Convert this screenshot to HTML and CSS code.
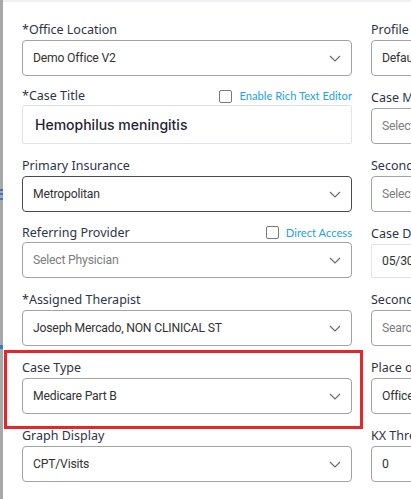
FILE: index.html
```html
<!DOCTYPE html>
<html>
<head>
<meta charset="utf-8">
<link rel="stylesheet" href="styles.css">
</head>
<body>
<div class="screen">
  <div class="backdrop"></div>
  <div class="modal">
    <div class="form">
      <div class="field">
        <div class="label">*Office Location</div>
        <div class="select"><span class="value">Demo Office V2</span><svg class="chev" width="12" height="7" viewBox="0 0 12 7"><path d="M1 1l5 5 5-5" fill="none" stroke="#6b6b6b" stroke-width="1.2"/></svg></div>
      </div>
      <div class="field">
        <div class="label">Profile</div>
        <div class="select"><span class="value">Default</span></div>
      </div>

      <div class="field">
        <div class="label label-check short"><span>*Case Title</span><span class="check"><span class="box"></span><span class="link">Enable Rich Text Editor</span></span></div>
        <div class="text-input"><span class="title-value">Hemophilus meningitis</span></div>
      </div>
      <div class="field">
        <div class="label">Case Manager</div>
        <div class="select"><span class="value ph">Select</span></div>
      </div>

      <div class="field">
        <div class="label">Primary Insurance</div>
        <div class="select focused"><span class="value">Metropolitan</span><svg class="chev" width="12" height="7" viewBox="0 0 12 7"><path d="M1 1l5 5 5-5" fill="none" stroke="#6b6b6b" stroke-width="1.2"/></svg></div>
      </div>
      <div class="field">
        <div class="label">Secondary Insurance</div>
        <div class="select"><span class="value ph">Select</span></div>
      </div>

      <div class="field">
        <div class="label label-check mid"><span>Referring Provider</span><span class="check"><span class="box"></span><span class="link">Direct Access</span></span></div>
        <div class="select"><span class="value ph">Select Physician</span><svg class="chev" width="12" height="7" viewBox="0 0 12 7"><path d="M1 1l5 5 5-5" fill="none" stroke="#6b6b6b" stroke-width="1.2"/></svg></div>
      </div>
      <div class="field">
        <div class="label">Case Date</div>
        <div class="date-input"><span class="value">05/30/2024</span></div>
      </div>

      <div class="field">
        <div class="label">*Assigned Therapist</div>
        <div class="select"><span class="value">Joseph Mercado, NON CLINICAL ST</span><svg class="chev" width="12" height="7" viewBox="0 0 12 7"><path d="M1 1l5 5 5-5" fill="none" stroke="#6b6b6b" stroke-width="1.2"/></svg></div>
      </div>
      <div class="field">
        <div class="label">Secondary Therapist</div>
        <div class="select"><span class="value ph">Search</span></div>
      </div>

      <div class="field highlighted">
        <div class="label">Case Type</div>
        <div class="select"><span class="value">Medicare Part B</span><svg class="chev" width="12" height="7" viewBox="0 0 12 7"><path d="M1 1l5 5 5-5" fill="none" stroke="#6b6b6b" stroke-width="1.2"/></svg></div>
      </div>
      <div class="field">
        <div class="label">Place of Service</div>
        <div class="select"><span class="value">Office</span></div>
      </div>

      <div class="field">
        <div class="label">Graph Display</div>
        <div class="select"><span class="value">CPT/Visits</span><svg class="chev" width="12" height="7" viewBox="0 0 12 7"><path d="M1 1l5 5 5-5" fill="none" stroke="#6b6b6b" stroke-width="1.2"/></svg></div>
      </div>
      <div class="field">
        <div class="label">KX Threshold</div>
        <div class="select"><span class="value">0</span></div>
      </div>
    </div>
  </div>
</div>
</body>
</html>
```

FILE: styles.css
```css
html, body {
  margin: 0;
  padding: 0;
  background: #ffffff;
  overflow: hidden;
}
.screen {
  display: flex;
  width: 411px;
  height: 499px;
  overflow: hidden;
}
.backdrop {
  flex: 0 0 3px;
  background:
    linear-gradient(to bottom,
      #a8a8a8 0, #a8a8a8 189px,
      #3a78c0 189px, #3a78c0 191px,
      #a8a8a8 191px, #a8a8a8 193px,
      #3a78c0 193px, #3a78c0 195px,
      #a8a8a8 195px, #a8a8a8 198px,
      #3a78c0 198px, #3a78c0 200px,
      #a8a8a8 200px, #a8a8a8 345px,
      #3a78c0 345px, #3a78c0 349px,
      #a8a8a8 349px);
}
.modal {
  flex: 1 0 auto;
  background: #fff;
  border-top: 2px solid #eef0f4;
  min-width: 720px;
}
.form {
  display: grid;
  grid-template-columns: 330px 330px;
  column-gap: 19px;
  row-gap: 11px;
  padding: 17px 0 0 19px;
  align-items: start;
}
.field {
  position: relative;
}
.label {
  font-family: "Noto Sans", sans-serif;
  font-size: 12.5px;
  line-height: 21px;
  height: 21px;
  color: #2d3446;
  white-space: nowrap;
}
.label-check {
  display: flex;
  justify-content: space-between;
  align-items: center;
}
.label-check.short { height: 18px; line-height: 18px; }
.label-check.mid { height: 19px; line-height: 19px; }
.check {
  display: flex;
  align-items: center;
  gap: 7px;
}
.box {
  width: 11px;
  height: 11px;
  border: 1px solid #7a7a7a;
  border-radius: 2px;
  background: #fff;
}
.link {
  font-family: Lato, sans-serif;
  color: #22a0f2;
  font-size: 11.2px;
}
.select {
  box-sizing: border-box;
  height: 36px;
  border: 1px solid #a3a3a3;
  border-radius: 4px;
  display: flex;
  align-items: center;
  justify-content: space-between;
  padding: 0 10px 0 10px;
  background: #fff;
}
.select.focused {
  border-color: #4a4a4a;
}
.value {
  font-family: Roboto, sans-serif;
  font-size: 12.2px;
  letter-spacing: -0.2px;
  color: #333;
  white-space: nowrap;
}
.value.ph {
  color: #7d7d7d;
}
.chev {
  display: block;
  flex: none;
}
.text-input {
  box-sizing: border-box;
  height: 39px;
  border: 1px solid #dfe3ea;
  border-radius: 2px;
  display: flex;
  align-items: center;
  padding: 0 12px;
}
.title-value {
  font-family: Inter, sans-serif;
  font-size: 14px;
  font-weight: 500;
  color: #1f2533;
}
.date-input {
  box-sizing: border-box;
  height: 34px;
  border: 1px solid #dfe3ea;
  border-radius: 2px;
  display: flex;
  align-items: center;
  padding: 0 10px;
}
.highlighted::after {
  content: "";
  position: absolute;
  left: -18px;
  right: -11px;
  top: -7px;
  bottom: -15px;
  border: 3px solid #e5262b;
  pointer-events: none;
}
```
